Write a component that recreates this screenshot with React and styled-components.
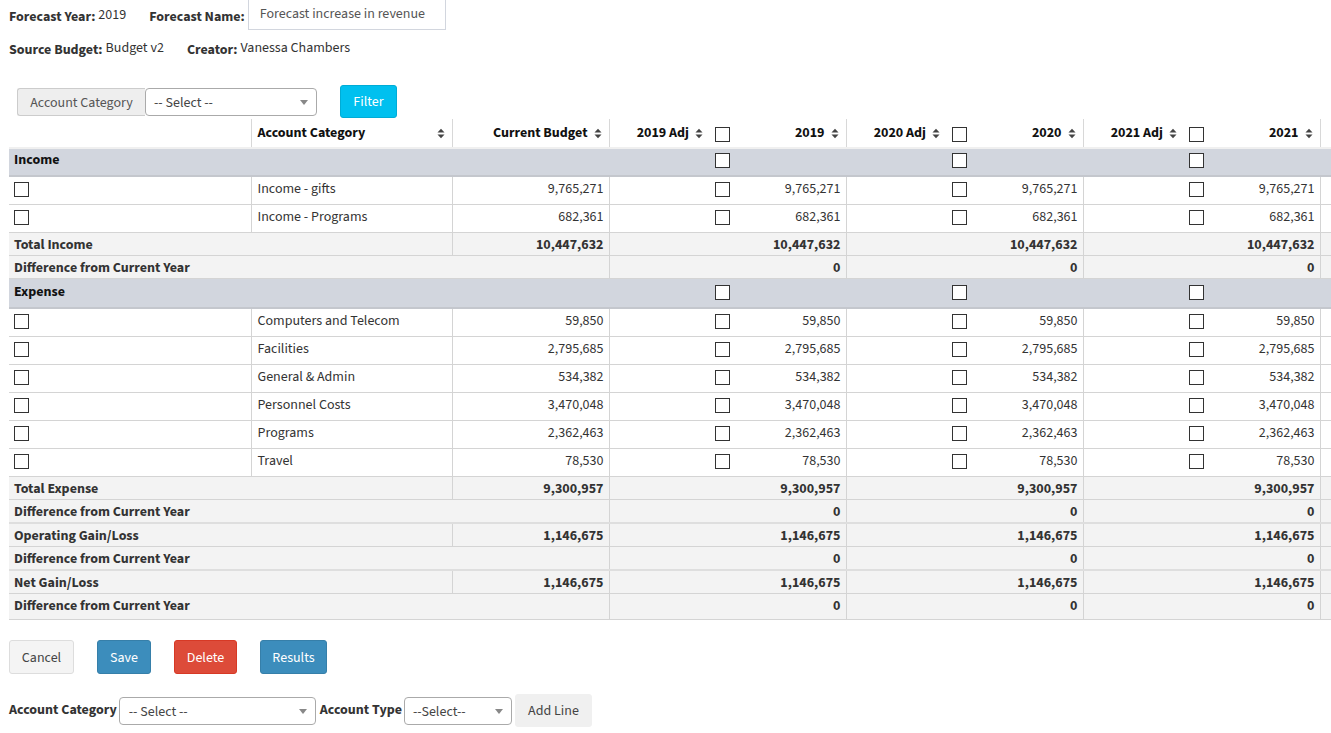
import React from "react";
import styled, { createGlobalStyle } from "styled-components";

const GlobalStyle = createGlobalStyle`
  html, body {
    margin: 0;
    padding: 0;
    background: #fff;
    overflow-x: hidden;
  }
  body {
    font-family: "Source Sans Pro", "Source Sans 3", Lato, "Open Sans", sans-serif;
    font-size: 14px;
    color: #333;
  }
`;

const Page = styled.div`
  padding: 0 0 0 9px;
  width: 1360px;
`;

const InfoRow = styled.div`
  display: flex;
  align-items: center;
  height: ${(p) => p.h}px;
  margin-top: ${(p) => p.mt || 0}px;
`;

const Pair = styled.div`
  display: flex;
  align-items: center;
  margin-right: ${(p) => p.mr || 0}px;
`;

const Label = styled.span`
  font-weight: 700;
  color: #333;
  padding-top: 3px;
  margin-right: ${(p) => (p.gap != null ? p.gap : 3)}px;
`;

const Value = styled.span`
  color: #333;
  padding-bottom: 1px;
`;

const NameInput = styled.div`
  box-sizing: border-box;
  width: 198px;
  height: 31px;
  margin-top: -2px;
  border: 1px solid #d2d6de;
  padding: 0 11px;
  display: flex;
  align-items: center;
  color: #555;
`;

const FilterRow = styled.div`
  display: flex;
  align-items: center;
  margin: 25px 0 1px 8px;
  height: 33px;
`;

const Addon = styled.div`
  box-sizing: border-box;
  width: 128px;
  height: 28px;
  background: #eee;
  border: 1px solid #ccc;
  border-right: none;
  border-radius: 3px 0 0 3px;
  color: #555;
  display: flex;
  align-items: center;
  justify-content: center;
  padding-top: 2px;
`;

const SelectBox = styled.div`
  box-sizing: border-box;
  width: ${(p) => p.w}px;
  height: ${(p) => p.h || 28}px;
  border: 1px solid #aaa;
  border-radius: 4px;
  background: #fff;
  display: flex;
  align-items: center;
  justify-content: space-between;
  padding: 2px 8px 0 ${(p) => p.pl || 8}px;
  color: #444;
`;

const Caret = styled.span`
  width: 0;
  height: 0;
  border-left: 4px solid transparent;
  border-right: 4px solid transparent;
  border-top: 5px solid #888;
`;

const Button = styled.button`
  box-sizing: border-box;
  width: ${(p) => p.w}px;
  height: ${(p) => p.h || 34}px;
  margin-left: ${(p) => p.ml || 0}px;
  font-family: inherit;
  font-size: 14px;
  border-radius: 3px;
  border: 1px solid ${(p) => p.border};
  background: ${(p) => p.bg};
  color: ${(p) => p.fg};
  padding: 1px 0 0;
  cursor: pointer;
`;

const Table = styled.table`
  border-collapse: collapse;
  table-layout: fixed;
  width: 1341px;
  line-height: 18px;
`;

const Th = styled.th`
  padding: 5px ${(p) => (p.adj ? 3 : 7)}px 5px 6px;
  font-weight: 700;
  color: #111;
  text-align: ${(p) => (p.left ? "left" : "right")};
  border-right: ${(p) => (p.noBorder ? "none" : "1px solid #d8d8d8")};
  border-bottom: 2px solid #f0f0f0;
  white-space: nowrap;
`;

const HeadInner = styled.div`
  display: flex;
  align-items: center;
  justify-content: ${(p) => (p.spread ? "space-between" : "flex-end")};
  gap: 6px;
  height: 18px;
`;

const GroupRow = styled.tr`
  background: #d2d6de;
  border-bottom: 2px solid #c4c7cd;
`;

const GroupCell = styled.td`
  padding: ${(p) => p.pt}px 3px 6px 5px;
  font-weight: 700;
  color: #111;
  text-align: ${(p) => (p.right ? "right" : "left")};
`;

const DataRow = styled.tr`
  border-bottom: 1px solid #d4d4d4;
`;

const Td = styled.td`
  padding: 3px ${(p) => (p.adj ? 3 : 5)}px
    ${(p) => (p.tight ? 1 + (p.extra || 0) : 6)}px ${(p) => (p.pl != null ? p.pl : 6)}px;
  text-align: ${(p) => (p.right ? "right" : "left")};
  border-right: ${(p) => (p.noBorder ? "none" : "1px solid #d4d4d4")};
  font-weight: ${(p) => (p.bold ? 700 : 400)};
  color: #333;
  white-space: nowrap;
`;

const TotalRow = styled.tr`
  background: #f3f3f3;
  border-bottom: 1px solid #d4d4d4;
  border-top: ${(p) => (p.thick ? "2px solid #dedede" : "none")};
`;

const Check = styled.input.attrs({ type: "checkbox" })`
  appearance: none;
  -webkit-appearance: none;
  box-sizing: border-box;
  width: 15px;
  height: 15px;
  margin: 2px 0 0 ${(p) => p.ml || 0}px;
  border: 1px solid #333;
  background: #fff;
  border-radius: 0;
  vertical-align: top;
`;

const ButtonRow = styled.div`
  display: flex;
  margin-top: 20px;
`;

const AddRow = styled.div`
  display: flex;
  align-items: center;
  margin-top: 20px;
`;

const AddLabel = styled.span`
  font-weight: 700;
  color: #333;
  margin-right: 2px;
  margin-left: ${(p) => p.ml || 0}px;
  padding-bottom: 2px;
`;

const SortIcon = () => (
  <svg width="8" height="11" viewBox="0 0 8 11">
    <path d="M0.5 4.5 L4 0.8 L7.5 4.5 Z" fill="#444" />
    <path d="M0.5 6.5 L4 10.2 L7.5 6.5 Z" fill="#444" />
  </svg>
);

const years = ["2019", "2020", "2021"];

const incomeRows = [
  ["Income - gifts", "9,765,271"],
  ["Income - Programs", "682,361"],
];

const expenseRows = [
  ["Computers and Telecom", "59,850"],
  ["Facilities", "2,795,685"],
  ["General & Admin", "534,382"],
  ["Personnel Costs", "3,470,048"],
  ["Programs", "2,362,463"],
  ["Travel", "78,530"],
];

const Group = ({ name, pt = 2 }) => (
  <GroupRow>
    <GroupCell pt={pt} colSpan={3}>
      {name}
    </GroupCell>
    {years.map((y) => (
      <React.Fragment key={y}>
        <GroupCell pt={pt} right>
          <Check />
        </GroupCell>
        <GroupCell pt={pt} />
      </React.Fragment>
    ))}
    <GroupCell pt={pt} />
  </GroupRow>
);

const Line = ({ name, amount }) => (
  <DataRow>
    <Td pl={5}>
      <Check />
    </Td>
    <Td>{name}</Td>
    <Td right>{amount}</Td>
    {years.map((y) => (
      <React.Fragment key={y}>
        <Td right adj noBorder>
          <Check />
        </Td>
        <Td right>{amount}</Td>
      </React.Fragment>
    ))}
    <Td noBorder />
  </DataRow>
);

const Total = ({ name, amount, thick }) => (
  <TotalRow thick={thick}>
    <Td tight colSpan={2} bold pl={5}>
      {name}
    </Td>
    <Td tight right bold>
      {amount}
    </Td>
    {years.map((y) => (
      <React.Fragment key={y}>
        <Td tight noBorder />
        <Td tight right bold>
          {amount}
        </Td>
      </React.Fragment>
    ))}
    <Td tight noBorder />
  </TotalRow>
);

const Diff = ({ extra = 0 }) => (
  <TotalRow>
    <Td tight extra={extra} colSpan={3} bold pl={5}>
      Difference from Current Year
    </Td>
    {years.map((y) => (
      <React.Fragment key={y}>
        <Td tight extra={extra} noBorder />
        <Td tight extra={extra} right bold>
          0
        </Td>
      </React.Fragment>
    ))}
    <Td tight extra={extra} noBorder />
  </TotalRow>
);

export default function App() {
  return (
    <Page>
      <GlobalStyle />
      <InfoRow h={30}>
        <Pair mr={23}>
          <Label>Forecast Year:</Label>
          <Value>2019</Value>
        </Pair>
        <Pair>
          <Label gap={3}>Forecast Name:</Label>
          <NameInput>Forecast increase in revenue</NameInput>
        </Pair>
      </InfoRow>
      <InfoRow h={24} mt={6}>
        <Pair mr={23}>
          <Label>Source Budget:</Label>
          <Value>Budget v2</Value>
        </Pair>
        <Pair>
          <Label>Creator:</Label>
          <Value>Vanessa Chambers</Value>
        </Pair>
      </InfoRow>

      <FilterRow>
        <Addon>Account Category</Addon>
        <SelectBox w={172}>
          <span>-- Select --</span>
          <Caret />
        </SelectBox>
        <Button w={57} h={33} ml={23} bg="#00c0ef" border="#00acd6" fg="#fff">
          Filter
        </Button>
      </FilterRow>

      <Table>
        <colgroup>
          <col style={{ width: 242 }} />
          <col style={{ width: 201 }} />
          <col style={{ width: 157 }} />
          {years.map((y) => (
            <React.Fragment key={y}>
              <col style={{ width: 124 }} />
              <col style={{ width: 113 }} />
            </React.Fragment>
          ))}
          <col style={{ width: 30 }} />
        </colgroup>
        <thead>
          <tr>
            <Th left />
            <Th left>
              <HeadInner spread>
                Account Category <SortIcon />
              </HeadInner>
            </Th>
            <Th>
              <HeadInner>
                Current Budget <SortIcon />
              </HeadInner>
            </Th>
            {years.map((y) => (
              <React.Fragment key={y}>
                <Th adj noBorder>
                  <HeadInner>
                    {y} Adj <SortIcon />
                    <Check ml={6} />
                  </HeadInner>
                </Th>
                <Th>
                  <HeadInner>
                    {y} <SortIcon />
                  </HeadInner>
                </Th>
              </React.Fragment>
            ))}
            <Th noBorder />
          </tr>
        </thead>
        <tbody>
          <Group name="Income" />
          {incomeRows.map(([n, a]) => (
            <Line key={n} name={n} amount={a} />
          ))}
          <Total name="Total Income" amount="10,447,632" />
          <Diff />
          <Group name="Expense" pt={4} />
          {expenseRows.map(([n, a]) => (
            <Line key={n} name={n} amount={a} />
          ))}
          <Total name="Total Expense" amount="9,300,957" />
          <Diff />
          <Total name="Operating Gain/Loss" amount="1,146,675" thick />
          <Diff />
          <Total name="Net Gain/Loss" amount="1,146,675" thick />
          <Diff extra={3} />
        </tbody>
      </Table>

      <ButtonRow>
        <Button w={65} bg="#f4f4f4" border="#ddd" fg="#444">
          Cancel
        </Button>
        <Button w={54} ml={23} bg="#3c8dbc" border="#367fa9" fg="#fff">
          Save
        </Button>
        <Button w={63} ml={23} bg="#dd4b39" border="#d73925" fg="#fff">
          Delete
        </Button>
        <Button w={67} ml={23} bg="#3c8dbc" border="#367fa9" fg="#fff">
          Results
        </Button>
      </ButtonRow>

      <AddRow>
        <AddLabel>Account Category</AddLabel>
        <SelectBox w={197} h={28} pl={9}>
          <span>-- Select --</span>
          <Caret />
        </SelectBox>
        <AddLabel ml={4}>Account Type</AddLabel>
        <SelectBox w={108} h={28} pl={8}>
          <span>--Select--</span>
          <Caret />
        </SelectBox>
        <Button w={77} h={33} ml={3} bg="#f0f0f0" border="#f0f0f0" fg="#444">
          Add Line
        </Button>
      </AddRow>
    </Page>
  );
}
